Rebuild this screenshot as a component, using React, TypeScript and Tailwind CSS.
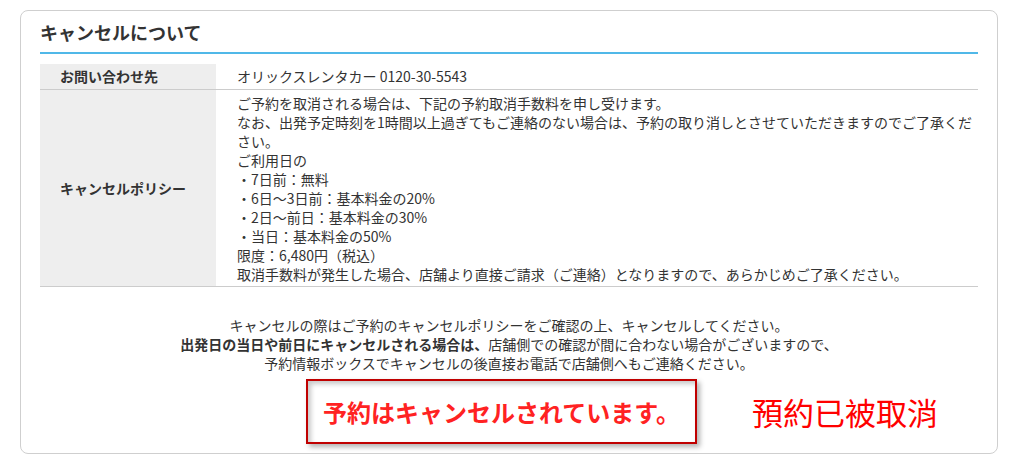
export default function App() {
  const policy = [
    "ご予約を取消される場合は、下記の予約取消手数料を申し受けます。",
    "なお、出発予定時刻を1時間以上過ぎてもご連絡のない場合は、予約の取り消しとさせていただきますのでご了承くだ",
    "さい。",
    "ご利用日の",
    "・7日前：無料",
    "・6日～3日前：基本料金の20%",
    "・2日～前日：基本料金の30%",
    "・当日：基本料金の50%",
    "限度：6,480円（税込）",
    "取消手数料が発生した場合、店舗より直接ご請求（ご連絡）となりますので、あらかじめご了承ください。",
  ];

  return (
    <div
      className="w-[1012px] h-[464px] bg-white pt-[10px] pl-[20px] text-[#333]"
      style={{ fontFamily: '"Noto Sans CJK JP", "Noto Sans", sans-serif' }}
    >
      <div className="w-[978px] border border-[#cfcfcf] rounded-[8px] px-[19px] pt-[9px] pb-[9px]">
        <h2 className="text-[18px] leading-[24px] font-bold pb-[8px] border-b-2 border-[#50b8e8]">
          キャンセルについて
        </h2>

        <div className="mt-[10px] text-[14px] leading-[19px]">
          <div className="flex border-b border-[#cccccc]">
            <div className="w-[176px] shrink-0 bg-[#eeeeee] pl-[20px] py-[3px] font-bold">お問い合わせ先</div>
            <div className="pl-[21px] py-[3px]">オリックスレンタカー 0120-30-5543</div>
          </div>
          <div className="flex border-b border-[#cccccc]">
            <div className="w-[176px] shrink-0 bg-[#eeeeee] pl-[20px] flex items-center font-bold">キャンセルポリシー</div>
            <div className="pl-[21px] pt-[4px] pb-[2px] whitespace-nowrap">
              {policy.map((line, i) => (
                <div key={i}>{line}</div>
              ))}
            </div>
          </div>
        </div>

        <div className="mt-[29px] text-center text-[14px] leading-[19px]">
          <p>キャンセルの際はご予約のキャンセルポリシーをご確認の上、キャンセルしてください。</p>
          <p>
            <span className="font-bold">出発日の当日や前日にキャンセルされる場合は、</span>
            店舗側での確認が間に合わない場合がございますので、
          </p>
          <p>予約情報ボックスでキャンセルの後直接お電話で店舗側へもご連絡ください。</p>
        </div>

        <div className="mt-[6px] flex items-center">
          <div className="ml-[266px] w-[391px] h-[65px] border-2 border-[#c00000] flex items-center justify-center shadow-[inset_3px_3px_5px_rgba(0,0,0,0.22),3px_3px_5px_rgba(0,0,0,0.3)]">
            <span className="text-[24px] leading-[30px] font-bold text-[#ff2222]">予約はキャンセルされています。</span>
          </div>
          <span
            className="ml-[55px] text-[31px] leading-[36px] text-[#ff0000]"
            style={{ fontFamily: '"Noto Sans CJK TC", serif' }}
          >
            預約已被取消
          </span>
        </div>
      </div>
    </div>
  );
}
